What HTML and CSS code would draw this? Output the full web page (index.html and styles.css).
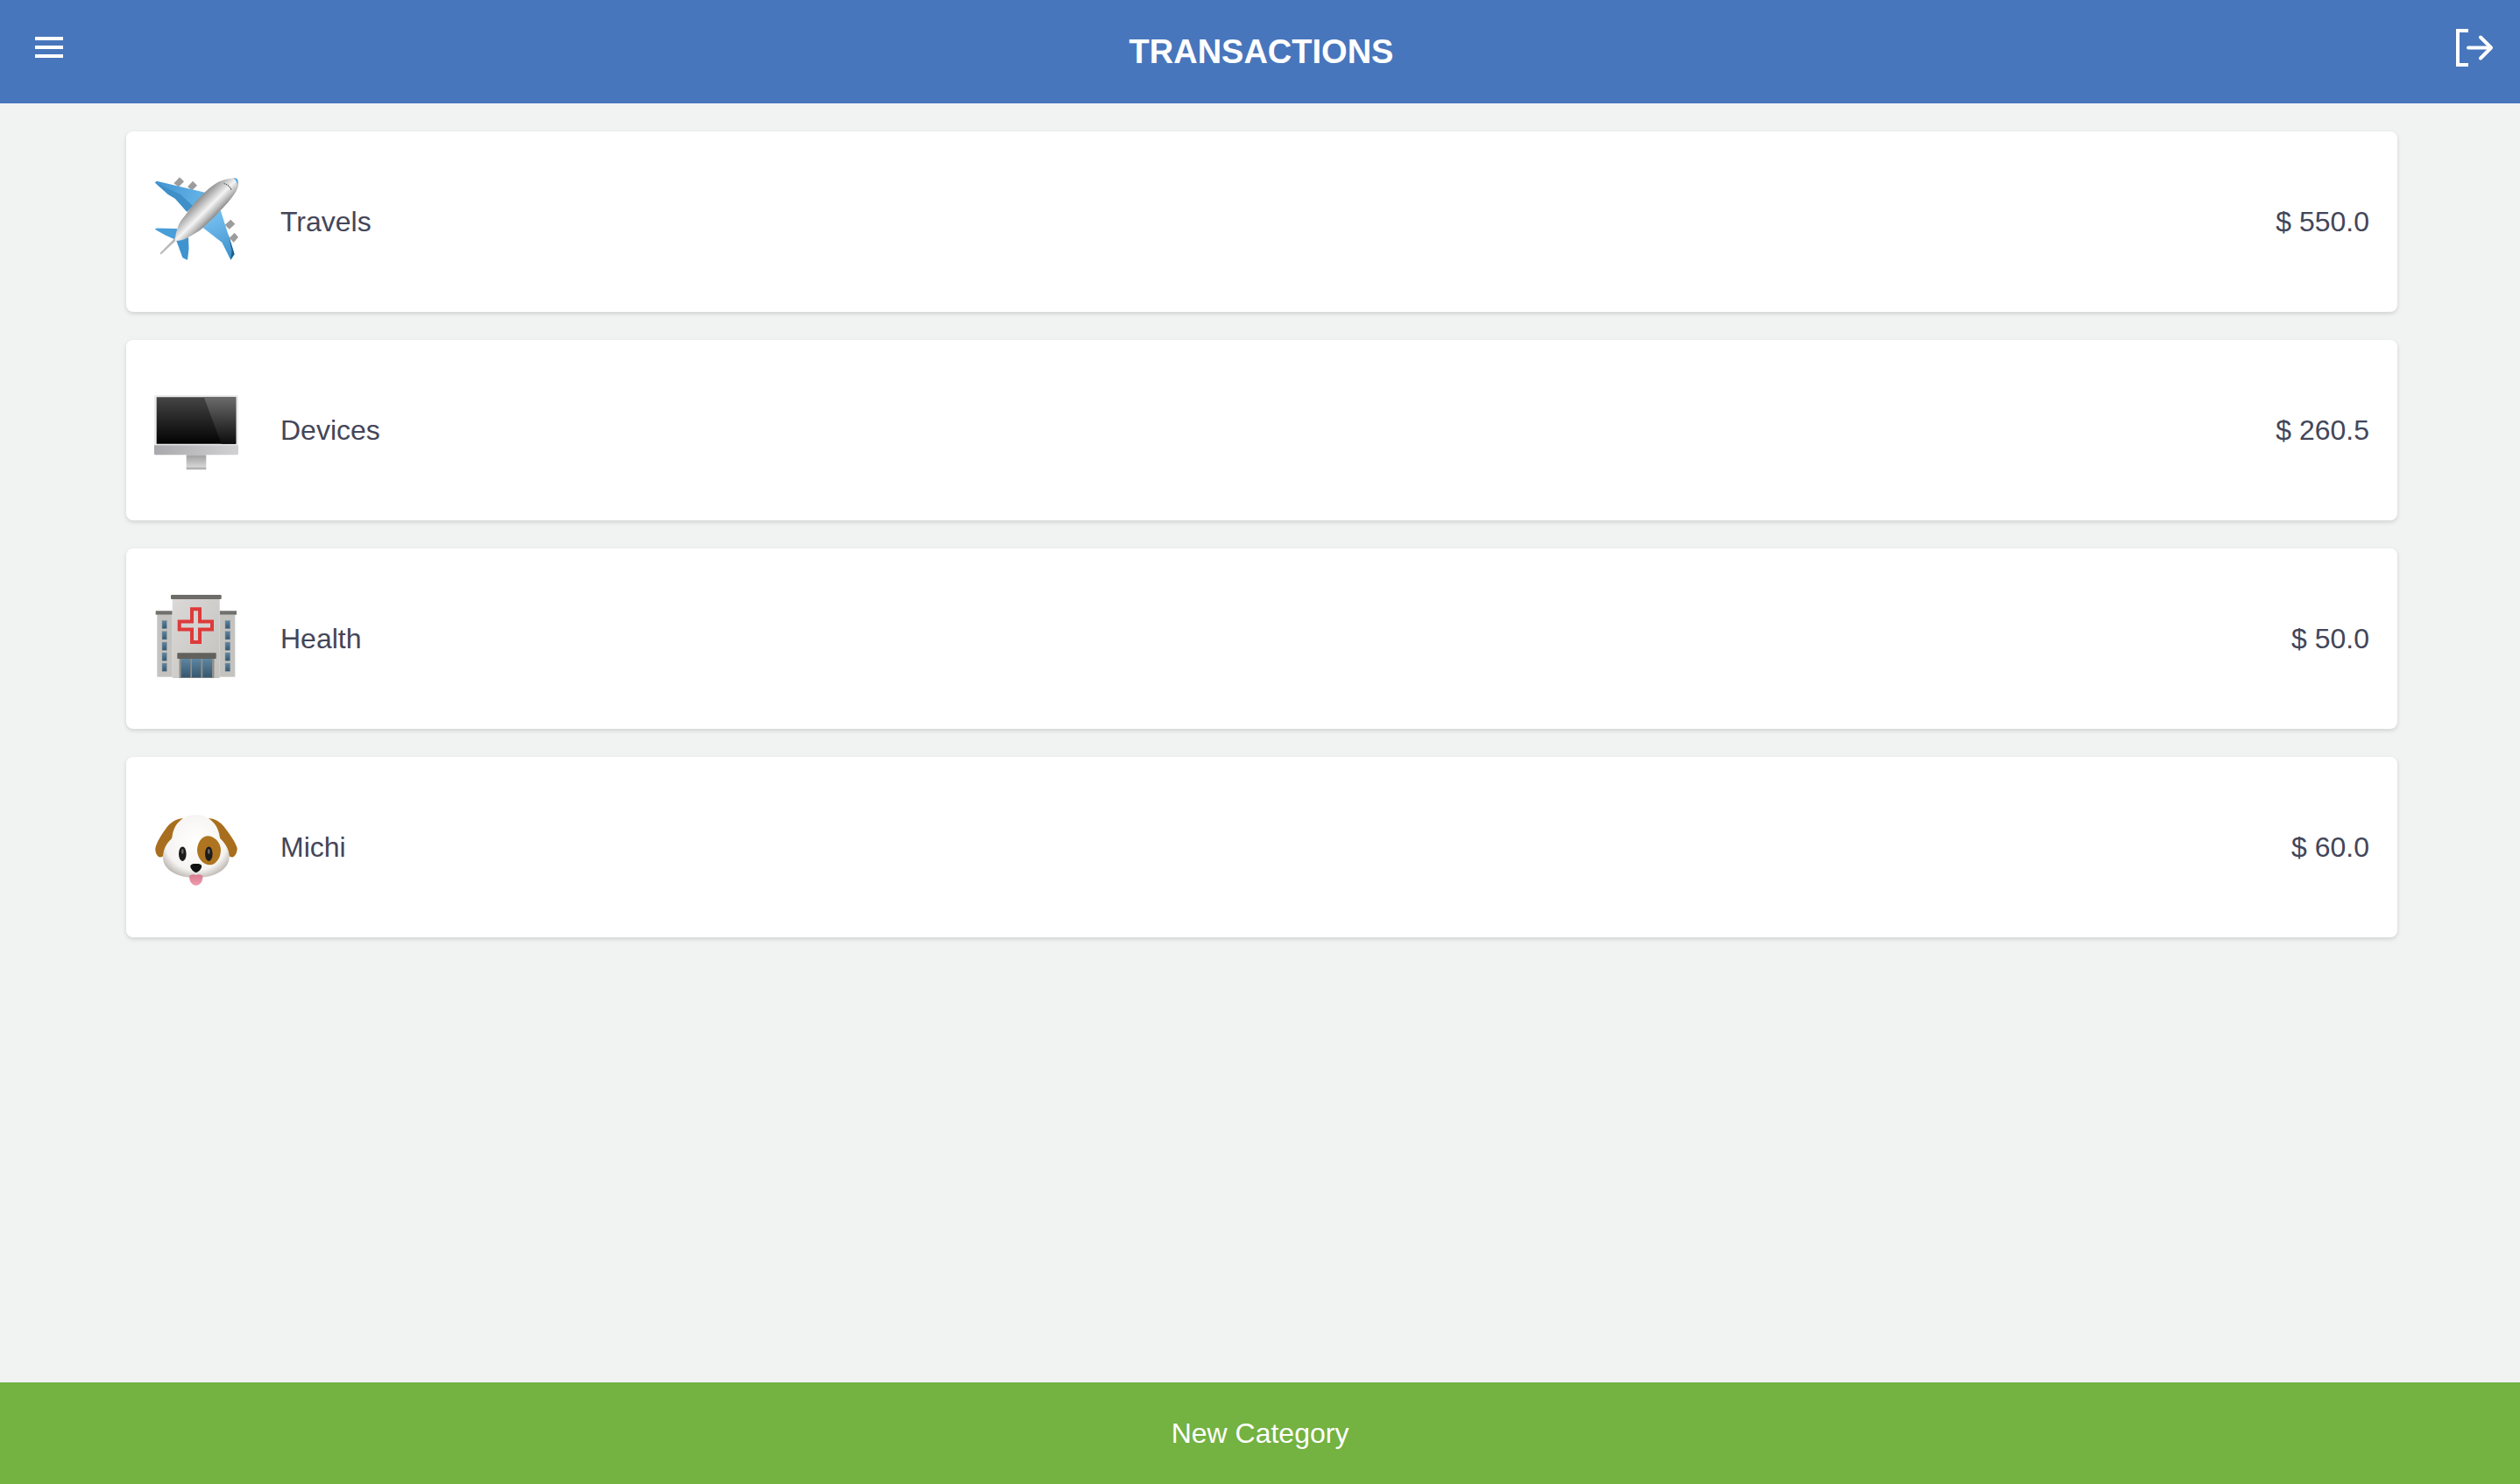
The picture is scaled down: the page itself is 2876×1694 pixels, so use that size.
FILE: index.html
```html
<!DOCTYPE html>
<html lang="en">
	<head>
		<meta charset="utf-8" />
		<title>Transactions</title>
		<meta name="viewport" content="width=device-width, initial-scale=1.0">
		<link rel="stylesheet" href="styles.css">
	</head>
	<body>
		<div id="app">
			<header class="topbar">
				<svg class="menu-icon" width="32" height="24" viewBox="0 0 32 24">
					<rect x="0" y="0" width="32" height="4" fill="#fff" />
					<rect x="0" y="10" width="32" height="4" fill="#fff" />
					<rect x="0" y="20" width="32" height="4" fill="#fff" />
				</svg>
				<h1 class="title">TRANSACTIONS</h1>
				<svg class="logout-icon" width="44" height="44" viewBox="0 0 44 44" fill="none" stroke="#fff" stroke-width="4" stroke-linecap="round" stroke-linejoin="round">
					<path d="M15 2H3V41H15" stroke-linecap="butt" stroke-linejoin="miter" />
					<path d="M15 21.500H40" />
					<path d="M29 9.500L41 21.500L29 33.500" />
				</svg>
			</header>

			<main class="list">
				<div class="card">
					<svg class="emoji" width="96" height="104" viewBox="0 0 96 104">
						<defs>
							<linearGradient id="planeBody" x1="38" y1="38" x2="58" y2="58" gradientUnits="userSpaceOnUse">
								<stop offset="0" stop-color="#8f8f8f" />
								<stop offset="0.25" stop-color="#bdbdbd" />
								<stop offset="0.55" stop-color="#f4f4f4" />
								<stop offset="0.8" stop-color="#bcbcbc" />
								<stop offset="1" stop-color="#858585" />
							</linearGradient>
							<linearGradient id="planeWing" x1="0" y1="8" x2="60" y2="30" gradientUnits="userSpaceOnUse">
								<stop offset="0" stop-color="#3f94d0" />
								<stop offset="1" stop-color="#69b6ea" />
							</linearGradient>
							<linearGradient id="planeWing2" x1="70" y1="50" x2="90" y2="95" gradientUnits="userSpaceOnUse">
								<stop offset="0" stop-color="#6fbaec" />
								<stop offset="1" stop-color="#3b8fca" />
							</linearGradient>
						</defs>
						<g fill="#9c9c9c">
							<path d="M22.300 8.300L29 1.300L34 6.300L28 12.300Z" />
							<path d="M38 12.300L44 5.700L49 10.700L43.300 16.300Z" />
							<path d="M80.700 55.700L87.300 49.700L92.300 54.700L85.700 60.700Z" />
							<path d="M85.700 70.700L91.700 64.700L96 69.700L90.700 75.700Z" />
						</g>
						<path d="M0.700 7.300L3 5.700L59 19L37.300 40.700L24 25.700L15.700 20.700Z" fill="url(#planeWing)" />
						<path d="M24 25.700L15.700 20.700L0.700 7.300L30 21L44 34L37.300 40.700Z" fill="#3f8fc8" />
						<path d="M75.700 39L55.700 59L77.300 75.700L87.300 95.700L91.500 89Z" fill="url(#planeWing2)" />
						<path d="M84.500 66L91.500 89L87.300 95.700L88.500 85Z" fill="#1f5d89" />
						<path d="M0.700 60.700L3 59.500L26 60L27 74L12.300 67.300Z" fill="#489ed8" />
						<path d="M25 73L39 70L39.500 83L38 95.700L36 95L32.300 93Z" fill="#3f94d0" />
						<path d="M7.800 89.500L6.500 88L28 66L34 65Z" fill="#b9b9b9" />
						<path d="M95.700 5C95.500 3 93.500 1.800 90 2.300C83 3 76 5 72.300 7.300C66 11 60 16 54 22.300C47 29 42 35 37.300 42.300C33 48 29 52 27.300 57.300C25.500 62 24.500 66 24 70.700L24 74C29 74 33 73 37.300 70.700C44 67 50 64 55.700 59C63 52 70 46 75.700 39C81 34 85 29 89 24C92 20 94.500 16 95.700 12.300Z" fill="url(#planeBody)" />
						<path d="M90.500 2.300C94 2 95.800 3.500 95.700 7L95.200 11.500C94.800 7 93 4 90.500 2.300Z" fill="#4ba3de" />
						<path d="M79.500 8.500C83 9 86.500 12 88.500 16.500" fill="none" stroke="#555" stroke-width="1.200" stroke-dasharray="1.500 1" />
					</svg>
					<span class="name">Travels</span>
					<span class="amount">$ 550.0</span>
				</div>

				<div class="card">
					<svg class="emoji" width="96" height="104" viewBox="0 0 96 104">
						<defs>
							<linearGradient id="screen" x1="0" y1="0" x2="0" y2="1">
								<stop offset="0" stop-color="#454545" />
								<stop offset="1" stop-color="#020202" />
							</linearGradient>
							<linearGradient id="glare" x1="0" y1="0" x2="0" y2="1">
								<stop offset="0" stop-color="#6b6b6b" />
								<stop offset="1" stop-color="#0c0c0c" />
							</linearGradient>
							<linearGradient id="chin" x1="0" y1="0" x2="1" y2="0">
								<stop offset="0" stop-color="#a9a9ad" />
								<stop offset="1" stop-color="#d2d2d4" />
							</linearGradient>
							<linearGradient id="stand" x1="0" y1="0" x2="0" y2="1">
								<stop offset="0" stop-color="#9f9fa1" />
								<stop offset="1" stop-color="#d6d6d6" />
							</linearGradient>
						</defs>
						<rect x="0" y="12" width="96" height="58" rx="1.500" fill="#ececee" />
						<rect x="2.700" y="14.300" width="90.600" height="53.400" fill="url(#screen)" />
						<path d="M56.700 14.300H93.300V67.700H76.700Z" fill="url(#glare)" />
						<rect x="36.700" y="80.300" width="22.600" height="14" fill="url(#stand)" />
						<rect x="36.700" y="94.300" width="22.600" height="2.700" fill="#b2b2b4" />
						<path d="M0 69.300H96V78.800a1.500 1.500 0 0 1-1.500 1.500H1.500a1.500 1.500 0 0 1-1.500-1.500Z" fill="url(#chin)" />
					</svg>
					<span class="name">Devices</span>
					<span class="amount">$ 260.5</span>
				</div>

				<div class="card">
					<svg class="emoji" width="96" height="104" viewBox="0 0 96 104">
						<defs>
							<linearGradient id="wall" x1="0" y1="0" x2="1" y2="1">
								<stop offset="0" stop-color="#dad9d7" />
								<stop offset="1" stop-color="#c3c2bf" />
							</linearGradient>
							<linearGradient id="glass" x1="0" y1="0" x2="0" y2="1">
								<stop offset="0" stop-color="#5d86a3" />
								<stop offset="1" stop-color="#37566e" />
							</linearGradient>
						</defs>
						<rect x="3.300" y="24.700" width="17.400" height="71" fill="#c4c3bf" />
						<rect x="74.700" y="24.700" width="17.600" height="71" fill="#c4c3bf" />
						<rect x="1.700" y="20.300" width="19" height="4.400" fill="#70706c" />
						<rect x="74.700" y="20.300" width="19.300" height="4.400" fill="#70706c" />
						<rect x="20.700" y="7" width="54" height="90" fill="url(#wall)" />
						<rect x="19" y="2" width="57.700" height="5" rx="1" fill="#6d6c68" />
						<g fill="url(#glass)" stroke="#8a9aa4" stroke-width="0.500">
							<rect x="9" y="31.300" width="5.300" height="9.400" />
							<rect x="9" y="43.700" width="5.300" height="9.300" />
							<rect x="9" y="56" width="5.300" height="9.300" />
							<rect x="9" y="68" width="5.300" height="9.300" />
							<rect x="9" y="80" width="5.300" height="9.300" />
							<rect x="81" y="31.300" width="5.700" height="9.400" />
							<rect x="81" y="43.700" width="5.700" height="9.300" />
							<rect x="81" y="56" width="5.700" height="9.300" />
							<rect x="81" y="68" width="5.700" height="9.300" />
							<rect x="81" y="80" width="5.700" height="9.300" />
						</g>
						<path d="M43 18.300H52V32.500H66V41.500H52V56H43V41.500H28.700V32.500H43Z" fill="#d3d3d1" stroke="#de3a3a" stroke-width="4" />
						<rect x="26.300" y="68.300" width="44.400" height="6.700" rx="0.800" fill="#62615d" />
						<rect x="28.500" y="75" width="40" height="22" fill="#8f8e8a" />
						<rect x="30.700" y="75" width="10.600" height="21.300" fill="url(#glass)" />
						<rect x="43" y="75" width="10.300" height="21.300" fill="url(#glass)" />
						<rect x="55.300" y="75" width="10.700" height="21.300" fill="url(#glass)" />
					</svg>
					<span class="name">Health</span>
					<span class="amount">$ 50.0</span>
				</div>

				<div class="card">
					<svg class="emoji" width="96" height="104" viewBox="0 0 96 104">
						<defs>
							<radialGradient id="head" cx="0.500" cy="0.420" r="0.640">
								<stop offset="0" stop-color="#ffffff" />
								<stop offset="0.720" stop-color="#f6f4f2" />
								<stop offset="1" stop-color="#b0aaa4" />
							</radialGradient>
							<linearGradient id="tongue" x1="0" y1="0" x2="0" y2="1">
								<stop offset="0" stop-color="#d97a90" />
								<stop offset="1" stop-color="#ee9cae" />
							</linearGradient>
						</defs>
						<path d="M37 19C26 18 18 24 14 30C8 38 3 46 1.300 53.300C1 58 3 62 5.700 63.300C7.500 63.800 9 63.300 10 62.300L24 34Z" fill="#a86e1d" />
						<path d="M58 19C69 18 76.700 24 80.700 30C86.700 38 92.700 46 94.700 53.300C94.700 58 92.700 62 90 63.300C88.200 63.800 86.700 63.300 85.700 62.300L71 34Z" fill="#a86e1d" />
						<path d="M47.300 15C63 15 74 27 75 42C82 48 86 56 85.700 64C85 78 68 87 47.300 87C27 87 10 78 10 64C10 56 13 48 20.500 42C21 27 32 15 47.300 15Z" fill="url(#head)" />
						<path d="M60.700 39.300C68 39 75.500 46 76 55C76 65 70 72 64 72.300C56 72.500 49 65 49 55C49.500 47 54 39.800 60.700 39.300Z" fill="#ae741f" />
						<ellipse cx="32.300" cy="59.700" rx="4.300" ry="8.300" fill="#1c1c1c" />
						<ellipse cx="62.300" cy="59.700" rx="4.300" ry="8.300" fill="#1c1c1c" />
						<ellipse cx="32.300" cy="57" rx="1.300" ry="3" fill="#6a6a6a" />
						<ellipse cx="62.300" cy="57" rx="1.300" ry="3" fill="#6a6a6a" />
						<path d="M40.200 84.500C43 83 46 83 47.700 84C49.500 83 52.500 83 55.200 84.500C56 90 53 95.700 47.700 95.700C42.500 95.700 39.500 90 40.200 84.500Z" fill="url(#tongue)" />
						<path d="M41.200 74C41.500 71.500 44 71 47.700 71C51.500 71 54 71.500 54.200 74C54 77 50 81 47.700 81C45.500 81 41.500 77 41.200 74Z" fill="#111" />
					</svg>
					<span class="name">Michi</span>
					<span class="amount">$ 60.0</span>
				</div>
			</main>

			<footer class="new-btn">New Category</footer>
		</div>
	</body>
</html>
```

FILE: styles.css
```css
body, html {
	margin:0;
	padding:0;
	height:100%;
	font-family:"Liberation Sans", Arial, sans-serif;
}
#app {
	display:flex;
	flex-direction:column;
	height:100vh;
	background-color:#f1f3f3;
}
.topbar {
	display:grid;
	grid-template-columns:1fr auto 1fr;
	align-items:start;
	flex:none;
	height:118px;
	padding:0 30px 0 40px;
	background-color:#4876bc;
	color:white;
}
.menu-icon {
	margin-top:42px;
}
.logout-icon {
	margin-top:33px;
	justify-self:end;
}
.title {
	margin:0 0 0 -7px;
	font-size:38px;
	font-weight:bold;
	line-height:118px;
}
.list {
	flex:1;
	display:flex;
	flex-direction:column;
	gap:32px;
	padding:32px 140px 0 144px;
}
.card {
	display:flex;
	align-items:center;
	height:206px;
	padding:0 32px;
	box-sizing:border-box;
	background-color:white;
	border-radius:8px;
	box-shadow:0 2px 5px rgba(0,0,0,0.14);
	font-size:32px;
	color:#434659;
}
.emoji {
	flex:none;
	margin-right:48px;
}
.name {
	flex:1;
}
.new-btn {
	flex:none;
	height:116px;
	line-height:116px;
	text-align:center;
	font-size:32px;
	color:white;
	background-color:#74b241;
}
```
